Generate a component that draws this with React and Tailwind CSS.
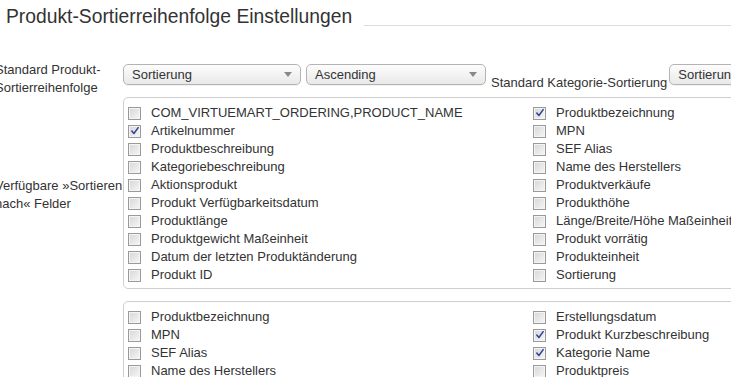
const Checkbox = ({ checked }) => (
  <span className="flex h-[13px] w-[13px] shrink-0 items-center justify-center border border-[#9a9a9a] bg-gradient-to-br from-[#d6d6d6] to-[#f7f7f7] shadow-[inset_0_0_0_1px_#f4f4f4]">
    {checked && (
      <svg viewBox="0 0 11 11" className="h-[10px] w-[10px]">
        <path d="M2 5.5 L4.3 8.3 L9 1.8" fill="none" stroke="#33449e" strokeWidth="1.7" strokeLinecap="round" strokeLinejoin="round" />
      </svg>
    )}
  </span>
)

const Item = ({ label, checked }) => (
  <label className="flex h-[18px] items-center">
    <Checkbox checked={checked} />
    <span className="ml-[10px] whitespace-nowrap">{label}</span>
  </label>
)

const Select = ({ value, width }) => (
  <div
    className={`flex h-[21px] shrink-0 items-center justify-between rounded-[5px] border border-[#b4b4b4] bg-gradient-to-b from-[#fdfdfd] to-[#e9e9e9] pl-[8px] pr-[8px] shadow-[0_1px_1px_rgba(0,0,0,0.06)] ${width}`}
  >
    <span className="whitespace-nowrap">{value}</span>
    <span className="h-0 w-0 border-x-[4px] border-t-[5px] border-x-transparent border-t-[#888]" />
  </div>
)

const firstBox = [
  ["COM_VIRTUEMART_ORDERING,PRODUCT_NAME", false, "Produktbezeichnung", true],
  ["Artikelnummer", true, "MPN", false],
  ["Produktbeschreibung", false, "SEF Alias", false],
  ["Kategoriebeschreibung", false, "Name des Herstellers", false],
  ["Aktionsprodukt", false, "Produktverkäufe", false],
  ["Produkt Verfügbarkeitsdatum", false, "Produkthöhe", false],
  ["Produktlänge", false, "Länge/Breite/Höhe Maßeinheit", false],
  ["Produktgewicht Maßeinheit", false, "Produkt vorrätig", false],
  ["Datum der letzten Produktänderung", false, "Produkteinheit", false],
  ["Produkt ID", false, "Sortierung", false],
]

const secondBox = [
  ["Produktbezeichnung", false, "Erstellungsdatum", false],
  ["MPN", false, "Produkt Kurzbeschreibung", true],
  ["SEF Alias", false, "Kategorie Name", true],
  ["Name des Herstellers", false, "Produktpreis", false],
]

const FieldBox = ({ rows }) => (
  <div className="grid w-[820px] shrink-0 grid-cols-2 rounded-[5px] border border-[#cfcfcf] px-[4px] pb-[4px] pt-[6px]">
    <div className="flex flex-col">
      {rows.map(([l, c]) => (
        <Item key={l} label={l} checked={c} />
      ))}
    </div>
    <div className="flex flex-col">
      {rows.map(([, , l, c]) => (
        <Item key={l} label={l} checked={c} />
      ))}
    </div>
  </div>
)

export default function App() {
  return (
    <div className="h-[377px] w-[731px] overflow-hidden bg-white font-['Liberation_Sans',Arial,sans-serif] text-[13px] leading-[18px] text-[#333]">
      <div className="mt-[5px] flex items-start">
        <h1 className="ml-[6px] whitespace-nowrap text-[19.3px] leading-[24px] text-[#333]">
          Produkt-Sortierreihenfolge Einstellungen
        </h1>
        <div className="ml-[12px] mt-[20px] h-px flex-1 bg-[#dcdcdc]" />
      </div>

      <div className="mt-[32px] flex items-start">
        <div className="-ml-[5px] w-[128px] shrink-0">
          Standard Produkt-
          <br />
          Sortierreihenfolge
        </div>
        <div className="mt-[3px] flex items-start">
          <Select value="Sortierung" width="w-[178px]" />
          <Select value="Ascending" width="ml-[5px] w-[180px]" />
          <span className="ml-[5px] mr-[2px] mt-[10px] whitespace-nowrap">Standard Kategorie-Sortierung</span>
          <Select value="Sortierung" width="w-[178px]" />
        </div>
      </div>

      <div className="flex items-center">
        <div className="-ml-[5px] w-[128px] shrink-0 pt-[4px]">
          Verfügbare »Sortieren
          <br />
          nach« Felder
        </div>
        <FieldBox rows={firstBox} />
      </div>

      <div className="mt-[12px] flex items-start">
        <div className="-ml-[5px] w-[128px] shrink-0" />
        <FieldBox rows={secondBox} />
      </div>
    </div>
  )
}
